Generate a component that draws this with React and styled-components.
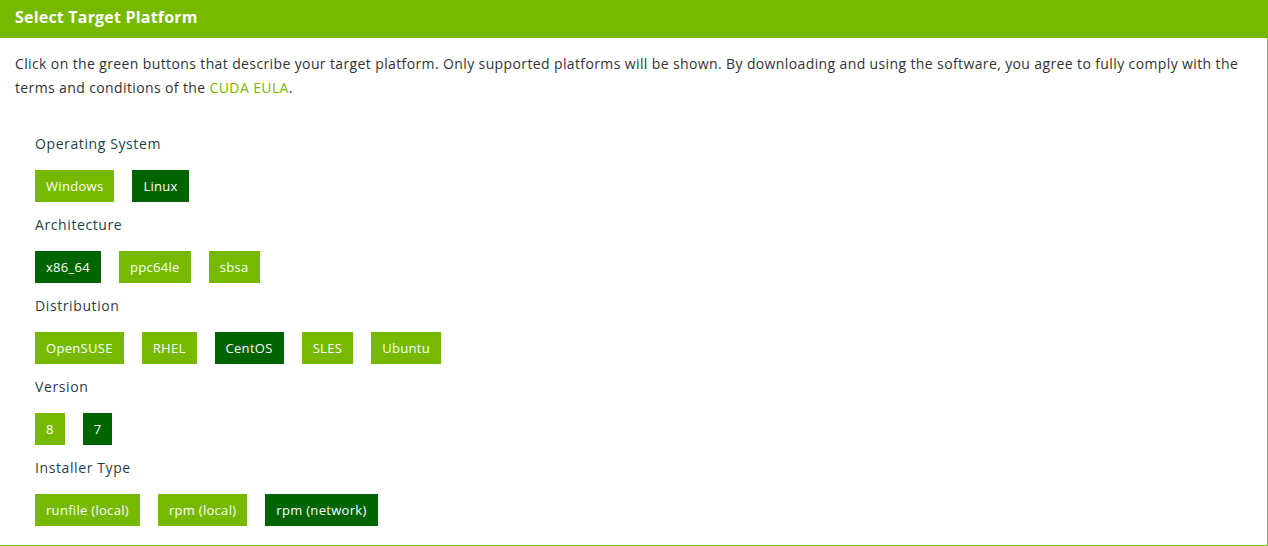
import React from "react";
import styled, { createGlobalStyle } from "styled-components";

const Global = createGlobalStyle`
  html, body { margin: 0; padding: 0; background: #fff; }
  body { font-family: "Open Sans", "Liberation Sans", Arial, sans-serif; }
  * { box-sizing: border-box; }
`;

const Panel = styled.section`
  width: 1268px;
  height: 546px;
  border-right: 1px solid #76b900;
  border-bottom: 1px solid #76b900;
  display: flex;
  flex-direction: column;
`;

const Header = styled.h2`
  margin: 0;
  height: 38px;
  background: #76b900;
  color: #fff;
  font-size: 16px;
  font-weight: bold;
  line-height: 34px;
  letter-spacing: 0.2px;
  padding: 0 15px;
`;

const Body = styled.div`
  padding: 14px 15px 0;
`;

const Intro = styled.p`
  margin: 0;
  font-size: 14px;
  line-height: 24px;
  letter-spacing: 0.38px;
  color: #333;
`;

const Link = styled.a`
  color: #76b900;
  text-decoration: none;
`;

const Groups = styled.div`
  padding: 34px 20px 0;
  display: flex;
  flex-direction: column;
`;

const Group = styled.div`
  display: flex;
  flex-direction: column;
  margin-bottom: 13px;
`;

const Label = styled.div`
  font-size: 14px;
  line-height: 20px;
  letter-spacing: 0.6px;
  color: #1f3f4a;
  margin-bottom: 16px;
`;

const Row = styled.div`
  display: flex;
  gap: 18px;
`;

const Btn = styled.button`
  height: 32px;
  padding: 0 11px;
  border: none;
  background: ${(p) => (p.$active ? "#006400" : "#76b900")};
  color: #fff;
  font-family: "Open Sans", "Liberation Sans", Arial, sans-serif;
  font-size: 13px;
  letter-spacing: 0.3px;
  cursor: pointer;
`;

const groups = [
  { label: "Operating System", options: ["Windows", "Linux"], active: "Linux" },
  { label: "Architecture", options: ["x86_64", "ppc64le", "sbsa"], active: "x86_64" },
  { label: "Distribution", options: ["OpenSUSE", "RHEL", "CentOS", "SLES", "Ubuntu"], active: "CentOS" },
  { label: "Version", options: ["8", "7"], active: "7" },
  { label: "Installer Type", options: ["runfile (local)", "rpm (local)", "rpm (network)"], active: "rpm (network)" },
];

export default function App() {
  return (
    <>
      <Global />
      <Panel>
        <Header>Select Target Platform</Header>
        <Body>
          <Intro>
            Click on the green buttons that describe your target platform. Only supported platforms will be shown. By downloading and using the software, you agree to fully comply with the terms and conditions of the <Link href="#">CUDA EULA</Link>.
          </Intro>
          <Groups>
            {groups.map((g) => (
              <Group key={g.label}>
                <Label>{g.label}</Label>
                <Row>
                  {g.options.map((o) => (
                    <Btn key={o} $active={o === g.active}>{o}</Btn>
                  ))}
                </Row>
              </Group>
            ))}
          </Groups>
        </Body>
      </Panel>
    </>
  );
}
